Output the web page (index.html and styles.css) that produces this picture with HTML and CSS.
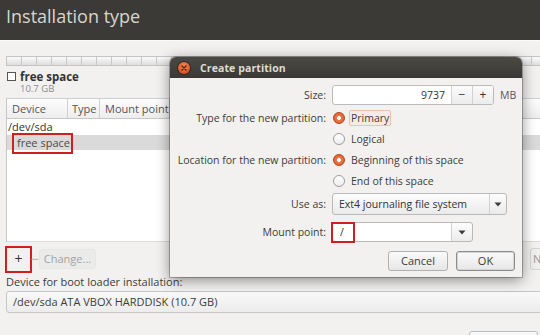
FILE: index.html
```html
<!DOCTYPE html>
<html>
<head>
<meta charset="utf-8">
<link rel="stylesheet" href="styles.css">
</head>
<body>
<div class="header"><h1 class="title">Installation type</h1></div>
<div class="content">
  <div class="pbar"></div>
  <div class="legend">
    <div class="legend-top"><span class="swatch"></span><span class="legend-name">free space</span></div>
    <div class="legend-size">10.7 GB</div>
  </div>
  <div class="table">
    <div class="thead">
      <div class="th c-dev">Device</div>
      <div class="th c-type">Type</div>
      <div class="th c-mount">Mount point</div>
      <div class="th c-rest"></div>
    </div>
    <div class="tbody">
      <div class="tr">/dev/sda</div>
      <div class="tr sel"><span class="mark">free space</span></div>
    </div>
  </div>
  <div class="tools">
    <span class="hl"><span class="tool add">+</span></span>
    <span class="tool minus">−</span>
    <span class="btn change">Change...</span>
    <span class="btn newtable">New</span>
  </div>
  <div class="boot-label">Device for boot loader installation:</div>
  <div class="boot-combo">/dev/sda ATA VBOX HARDDISK (10.7 GB)</div>
  <div class="bottom"><span class="btn bottom-btn"></span></div>
</div>

<div class="dialog">
  <div class="dtitle">
    <span class="close"><svg width="12" height="12" viewBox="0 0 12 12"><path d="M4 4 L8 8 M8 4 L4 8" stroke="#5a2310" stroke-width="1.4" stroke-linecap="round"/></svg></span>
    <span class="dtitle-text">Create partition</span>
  </div>
  <div class="dbody">
    <div class="row r-size">
      <div class="lbl">Size:</div>
      <div class="ctl">
        <div class="spin"><span class="spin-val">9737</span><span class="spin-btn">−</span><span class="spin-btn">+</span></div>
        <span class="unit">MB</span>
      </div>
    </div>
    <div class="row r-radio">
      <div class="lbl">Type for the new partition:</div>
      <div class="ctl"><span class="radio on"></span><span class="rtext focus">Primary</span></div>
    </div>
    <div class="row r-radio">
      <div class="lbl"></div>
      <div class="ctl"><span class="radio"></span><span class="rtext">Logical</span></div>
    </div>
    <div class="row r-radio">
      <div class="lbl">Location for the new partition:</div>
      <div class="ctl"><span class="radio on"></span><span class="rtext">Beginning of this space</span></div>
    </div>
    <div class="row r-radio">
      <div class="lbl"></div>
      <div class="ctl"><span class="radio"></span><span class="rtext">End of this space</span></div>
    </div>
    <div class="row r-use">
      <div class="lbl">Use as:</div>
      <div class="ctl">
        <div class="combo use"><span class="combo-text">Ext4 journaling file system</span><span class="combo-arrow"><svg width="8" height="5" viewBox="0 0 8 5"><path d="M0.5 0.5 H7.5 L4 4.5 Z" fill="#3c3c3c"/></svg></span></div>
      </div>
    </div>
    <div class="row r-mount">
      <div class="lbl">Mount point:</div>
      <div class="ctl">
        <div class="combo mount"><span class="entry"><span class="slash">/</span></span><span class="combo-arrow mbtn"><svg width="8" height="5" viewBox="0 0 8 5"><path d="M0.5 0.5 H7.5 L4 4.5 Z" fill="#3c3c3c"/></svg></span></div>
      </div>
    </div>
    <div class="dbuttons">
      <span class="btn dbtn">Cancel</span>
      <span class="btn dbtn ok">OK</span>
    </div>
  </div>
</div>
</body>
</html>
```
FILE: styles.css
```css
html, body {
  margin: 0;
  padding: 0;
}
body {
  width: 540px;
  height: 335px;
  overflow: hidden;
  background: #f2f1f0;
  font-family: "Open Sans", "DejaVu Sans", sans-serif;
  font-size: 10.5px;
  color: #3c3c3c;
  position: relative;
}
.header {
  height: 40px;
  background: #3b3a36;
  border-bottom: 1px solid #fbfbfa;
}
.title {
  margin: 0;
  padding: 3px 0 0 6px;
  font-size: 18px;
  font-weight: normal;
  line-height: 27px;
  color: #d9d5cc;
}
.content {
  padding: 0 0 0 6px;
  width: 534px;
  height: 294px;
  overflow: hidden;
}
.pbar {
  margin-top: 15px;
  height: 8px;
  width: 560px;
  border: 1px solid #c4c4c4;
  background:
    repeating-linear-gradient(90deg, transparent 0 14px, #c8c8c8 14px 15px),
    linear-gradient(#fbfbfb, #dedede);
}
.legend {
  margin-top: 3px;
  height: 29px;
}
.legend-top {
  display: flex;
  align-items: center;
  height: 14px;
}
.swatch {
  width: 7px;
  height: 7px;
  border: 1px solid #555;
  background: #fff;
  margin-left: 1px;
  margin-right: 4px;
}
.legend-name {
  font-weight: bold;
  font-size: 11.5px;
  color: #333;
}
.legend-size {
  font-size: 9.5px;
  color: #8c8c8c;
  padding-left: 14px;
  line-height: 12px;
}
.table {
  width: 540px;
  border-left: 1px solid #c6c6c6;
}
.thead {
  display: flex;
  height: 21px;
  background: linear-gradient(#fdfdfd, #ededed);
  border-top: 1px solid #d0d0d0;
  border-bottom: 1px solid #c8c8c8;
  box-sizing: border-box;
}
.th {
  line-height: 19px;
  font-size: 11px;
  color: #555;
  border-right: 1px solid #d0d0d0;
  box-sizing: border-box;
}
.c-dev { width: 61px; padding-left: 5px; }
.c-type { width: 32px; padding-left: 4px; }
.c-mount { width: 70px; padding-left: 5px; }
.c-rest { flex: 1; border-right: none; }
.tbody {
  background: #fff;
  height: 122px;
  border-bottom: 1px solid #dcdcdc;
}
.tr {
  height: 16px;
  line-height: 16px;
  font-size: 11px;
  color: #333;
  padding-left: 1px;
}
.tr.sel {
  height: 15px;
  background: #dadada;
  padding-left: 8px;
}
.mark {
  display: inline-block;
  width: 55px;
  height: 15px;
  line-height: 14px;
  padding-left: 2px;
  box-sizing: border-box;
  outline: 2px solid #cf1f1f;
  outline-offset: 1px;
  color: #4a4a4a;
}
.tools {
  display: flex;
  align-items: center;
  height: 28px;
  margin-top: 3px;
  white-space: nowrap;
}
.tools > * {
  flex: none;
}
.hl {
  display: inline-flex;
  width: 27px;
  height: 27px;
  border: 2px solid #cf1f1f;
  box-sizing: border-box;
  margin-left: -1px;
  align-items: center;
  justify-content: center;
}
.tool {
  font-size: 14px;
  line-height: 14px;
  color: #333;
}
.minus {
  color: #b0b0b0;
  margin-left: -1px;
  margin-right: 0;
}
.btn {
  display: inline-block;
  box-sizing: border-box;
  border: 1px solid #bdbdbd;
  border-radius: 3px;
  background: linear-gradient(#fafafa, #e7e7e7);
  text-align: center;
  font-size: 11px;
  color: #3c3c3c;
}
.change {
  width: 57px;
  height: 20px;
  line-height: 18px;
  border-color: #e6e6e6;
  background: #ebebea;
  color: #a3a3a3;
}
.newtable {
  margin-left: 434px;
  width: 40px;
  height: 22px;
  line-height: 20px;
  text-align: left;
  padding-left: 2px;
  color: #9a9a9a;
  border-color: #d6d6d6;
  background: #efefee;
}
.boot-label {
  margin-top: 1px;
  font-size: 11px;
  line-height: 15px;
  color: #3c3c3c;
}
.boot-combo {
  margin-top: 2px;
  height: 22px;
  width: 560px;
  box-sizing: border-box;
  border: 1px solid #c6c6c6;
  border-radius: 3px;
  background: linear-gradient(#f9f9f9, #ececec);
  line-height: 20px;
  padding-left: 6px;
  font-size: 11px;
  color: #3c3c3c;
}
.bottom {
  display: flex;
  justify-content: flex-end;
  padding-right: 2px;
  margin-top: 18px;
}
.bottom-btn {
  width: 69px;
  height: 22px;
}

/* dialog */
.dialog {
  position: absolute;
  left: 170px;
  top: 57px;
  width: 352px;
  height: 220px;
  background: #f2f1f0;
  border-radius: 6px 6px 0 0;
  box-shadow: 0 3px 14px rgba(0, 0, 0, 0.45), 0 0 0 1px rgba(0, 0, 0, 0.25);
}
.dtitle {
  height: 21px;
  background: linear-gradient(#4a4944, #3a3935);
  border-radius: 6px 6px 0 0;
  display: flex;
  align-items: center;
}
.close {
  width: 12px;
  height: 12px;
  border-radius: 50%;
  margin-left: 8px;
  background: radial-gradient(circle at 50% 35%, #f6895a, #dc5322 70%, #b8401a);
  box-shadow: 0 0 0 1px #2c2b28;
  display: flex;
}
.dtitle-text {
  margin-left: 10px;
  font-weight: bold;
  font-size: 10.5px;
  color: #dfdbd2;
  letter-spacing: 0.1px;
}
.dbody {
  padding-top: 7px;
}
.row {
  display: grid;
  grid-template-columns: 157px 1fr;
  column-gap: 5px;
  align-items: center;
}
.lbl {
  text-align: right;
  padding-right: 1px;
  color: #3c3c3c;
  white-space: nowrap;
}
.ctl {
  display: flex;
  align-items: center;
}
.r-size { height: 20px; margin-bottom: 2px; }
.r-radio { height: 21px; }
.r-use { height: 22px; margin-top: 2px; }
.r-mount { height: 20px; margin-top: 7px; }
.spin {
  display: flex;
  width: 162px;
  height: 20px;
  box-sizing: border-box;
  border: 1px solid #bcbcbc;
  border-radius: 3px;
  background: #fff;
  overflow: hidden;
}
.spin-val {
  flex: 1;
  text-align: right;
  padding-right: 6px;
  line-height: 18px;
  color: #333;
}
.spin-btn {
  width: 20px;
  border-left: 1px solid #d2d2d2;
  background: linear-gradient(#fbfbfb, #ececec);
  text-align: center;
  line-height: 18px;
  font-size: 12px;
  color: #333;
}
.unit {
  margin-left: 6px;
  color: #555;
}
.radio {
  width: 12px;
  height: 12px;
  box-sizing: border-box;
  border-radius: 50%;
  border: 1px solid #9d9d9d;
  background: linear-gradient(#ffffff, #ededed);
  margin-left: 1px;
  margin-right: 4px;
  flex: none;
  position: relative;
}
.radio.on {
  border-color: #b4461e;
  background: radial-gradient(circle, #ffffff 0 1.6px, #ec7a4d 2.2px, #d9541f 100%);
}
.rtext {
  color: #3c3c3c;
  padding: 0 1px;
  line-height: 14px;
  border: 1px solid transparent;
  border-radius: 2px;
}
.rtext.focus {
  border-color: #efc1ad;
  background: #f6ebe6;
}
.combo {
  display: flex;
  height: 22px;
  box-sizing: border-box;
  border: 1px solid #b9b9b9;
  border-radius: 3px;
  background: linear-gradient(#fdfdfd, #eaeaea);
}
.combo.use { width: 175px; }
.combo-text {
  flex: 1;
  padding-left: 6px;
  line-height: 20px;
  color: #333;
}
.combo-arrow {
  width: 16px;
  border-left: 1px solid #d0d0d0;
  display: flex;
  align-items: center;
  justify-content: center;
}
.combo.mount {
  width: 141px;
  height: 20px;
  background: linear-gradient(#fdfdfd, #ececec);
}
.entry {
  flex: 1;
  background: #fff;
  border-radius: 3px 0 0 3px;
  display: flex;
  align-items: center;
}
.slash {
  display: inline-block;
  width: 20px;
  height: 17px;
  line-height: 17px;
  padding-left: 7px;
  box-sizing: border-box;
  outline: 2px solid #cf1f1f;
  margin-left: 0;
  color: #333;
}
.mbtn { width: 20px; }
.dbuttons {
  display: flex;
  justify-content: flex-end;
  gap: 8px;
  padding-right: 7px;
  margin-top: 9px;
}
.dbtn {
  width: 60px;
  height: 20px;
  line-height: 18px;
  border-color: #b0b0b0;
}
.dbtn.ok {
  width: 59px;
  border-color: #8c8c8c;
  box-shadow: inset 0 0 0 1px #d5d5d5;
}
```
